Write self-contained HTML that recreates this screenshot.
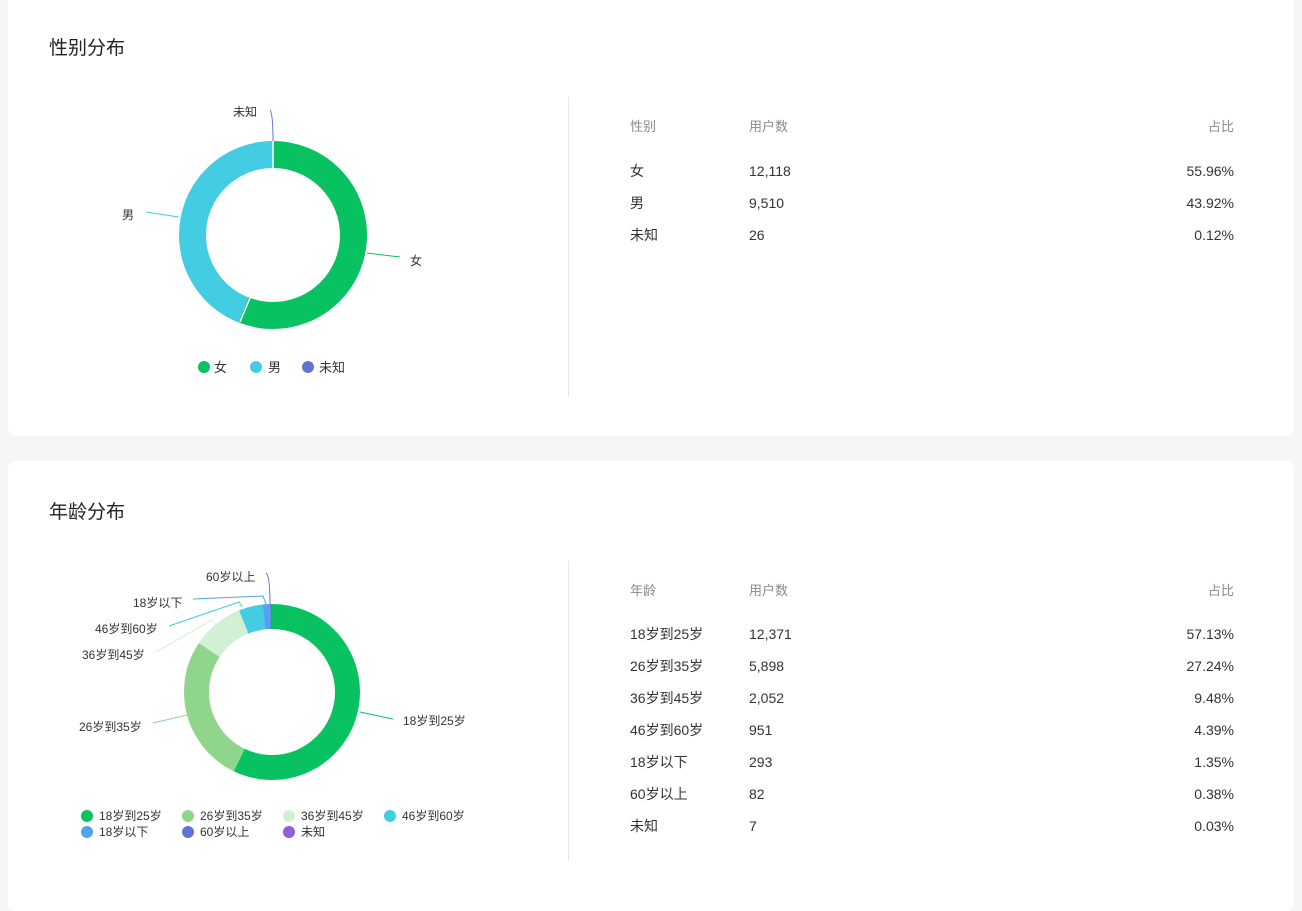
<!DOCTYPE html>
<html><head><meta charset="utf-8"><style>
body{margin:0;width:1302px;height:896px;background:#f5f6f8;font-family:"Liberation Sans","Noto Sans CJK SC",sans-serif;position:relative;overflow:hidden;color:#333}
.card{position:absolute;left:8px;width:1286px;background:#fff;border-radius:8px}
.vl{position:absolute;left:568px;width:1px;background:#e8e8e8}
</style></head><body>
<div class="card" style="top:-8px;height:444px"></div>
<div class="card" style="top:461px;height:450px"></div>
<div class="vl" style="top:97px;height:300px"></div>
<div class="vl" style="top:561px;height:300px"></div>

<svg style="position:absolute;left:0;top:0" width="1302" height="896" font-family="Liberation Sans,Noto Sans CJK SC,sans-serif">
<g font-size="19" fill="#222"><text x="49" y="54">性别分布</text><text x="49" y="518">年龄分布</text></g>
<g transform="translate(273,235) rotate(-90)" fill="none" stroke-width="27">
<circle r="80.5" stroke="#08c160" stroke-dasharray="283.05 600"/>
<circle r="80.5" stroke="#43cde3" stroke-dasharray="222.15 600" stroke-dashoffset="-283.05"/>
<circle r="80.5" stroke="#6174d3" stroke-dasharray="0.8 600" stroke-dashoffset="-505"/>
</g>
<line x1="273" y1="141" x2="273" y2="168" stroke="#fff" stroke-width="1.5"/>
<line x1="240" y1="322" x2="250" y2="298" stroke="#fff" stroke-width="1.5"/>
<path d="M270 110 Q273 114 273 141" stroke="#6174d3" fill="none"/>
<path d="M146 212 L179 217" stroke="#43cde3" fill="none"/>
<path d="M367 253 L400 257" stroke="#08c160" fill="none"/>
<g font-size="12" fill="#333">
<text x="233" y="116">未知</text><text x="122" y="219">男</text><text x="410" y="265">女</text>
</g>
<g font-size="13" fill="#333">
<circle cx="204" cy="367" r="6" fill="#08c160"/><text x="214" y="372">女</text>
<circle cx="256" cy="367" r="6" fill="#43cde3"/><text x="268" y="372">男</text>
<circle cx="308" cy="367" r="6" fill="#6174d3"/><text x="319" y="372">未知</text>
</g>

<g transform="translate(272,692) rotate(-90)" fill="none" stroke-width="25">
<circle r="75.5" stroke="#08c160" stroke-dasharray="271.03 600"/>
<circle r="75.5" stroke="#8fd68c" stroke-dasharray="129.23 600" stroke-dashoffset="-271.03"/>
<circle r="75.5" stroke="#d2f0d4" stroke-dasharray="44.97 600" stroke-dashoffset="-400.26"/>
<circle r="75.5" stroke="#43cde3" stroke-dasharray="20.83 600" stroke-dashoffset="-445.23"/>
<circle r="75.5" stroke="#50a3ee" stroke-dasharray="6.4 600" stroke-dashoffset="-466.06"/>
<circle r="75.5" stroke="#6174d3" stroke-dasharray="1.8 600" stroke-dashoffset="-472.46"/>
<circle r="75.5" stroke="#8e5fd6" stroke-dasharray="0.2 600" stroke-dashoffset="-474.26"/>
</g>
<path d="M360 712 L393 719" stroke="#08c160" fill="none"/>
<path d="M153 723 L187 715" stroke="#8fd68c" fill="none"/>
<path d="M156 652 L212 620 L216 625" stroke="#d2f0d4" fill="none"/>
<path d="M169 626 L239 602 L242 607" stroke="#43cde3" fill="none"/>
<path d="M193 599 L263 596 L266 604" stroke="#50a3ee" fill="none"/>
<path d="M266 573 Q270 576 270 604" stroke="#6174d3" fill="none"/>
<g font-size="12" fill="#333">
<text x="403" y="725">18岁到25岁</text><text x="79" y="731">26岁到35岁</text>
<text x="82" y="659">36岁到45岁</text><text x="95" y="633">46岁到60岁</text>
<text x="133" y="607">18岁以下</text><text x="206" y="581">60岁以上</text>
</g>
<g font-size="12" fill="#333">
<circle cx="87" cy="816" r="6" fill="#08c160"/><text x="99" y="820">18岁到25岁</text>
<circle cx="188" cy="816" r="6" fill="#8fd68c"/><text x="200" y="820">26岁到35岁</text>
<circle cx="289" cy="816" r="6" fill="#d2f0d4"/><text x="301" y="820">36岁到45岁</text>
<circle cx="390" cy="816" r="6" fill="#43cde3"/><text x="402" y="820">46岁到60岁</text>
<circle cx="87" cy="832" r="6" fill="#50a3ee"/><text x="99" y="836">18岁以下</text>
<circle cx="188" cy="832" r="6" fill="#6174d3"/><text x="200" y="836">60岁以上</text>
<circle cx="289" cy="832" r="6" fill="#8e5fd6"/><text x="301" y="836">未知</text>
</g>

<g font-size="13" fill="#8a8a8a">
<text x="630" y="131">性别</text><text x="749" y="131">用户数</text><text x="1234" y="131" text-anchor="end">占比</text>
<text x="630" y="595">年龄</text><text x="749" y="595">用户数</text><text x="1234" y="595" text-anchor="end">占比</text>
</g>
<g font-size="14" fill="#333">
<text x="630" y="176">女</text><text x="749" y="176">12,118</text><text x="1234" y="176" text-anchor="end">55.96%</text>
<text x="630" y="208">男</text><text x="749" y="208">9,510</text><text x="1234" y="208" text-anchor="end">43.92%</text>
<text x="630" y="240">未知</text><text x="749" y="240">26</text><text x="1234" y="240" text-anchor="end">0.12%</text>

<text x="630" y="639">18岁到25岁</text><text x="749" y="639">12,371</text><text x="1234" y="639" text-anchor="end">57.13%</text>
<text x="630" y="671">26岁到35岁</text><text x="749" y="671">5,898</text><text x="1234" y="671" text-anchor="end">27.24%</text>
<text x="630" y="703">36岁到45岁</text><text x="749" y="703">2,052</text><text x="1234" y="703" text-anchor="end">9.48%</text>
<text x="630" y="735">46岁到60岁</text><text x="749" y="735">951</text><text x="1234" y="735" text-anchor="end">4.39%</text>
<text x="630" y="767">18岁以下</text><text x="749" y="767">293</text><text x="1234" y="767" text-anchor="end">1.35%</text>
<text x="630" y="799">60岁以上</text><text x="749" y="799">82</text><text x="1234" y="799" text-anchor="end">0.38%</text>
<text x="630" y="831">未知</text><text x="749" y="831">7</text><text x="1234" y="831" text-anchor="end">0.03%</text>
</g>
</svg>
</body></html>
